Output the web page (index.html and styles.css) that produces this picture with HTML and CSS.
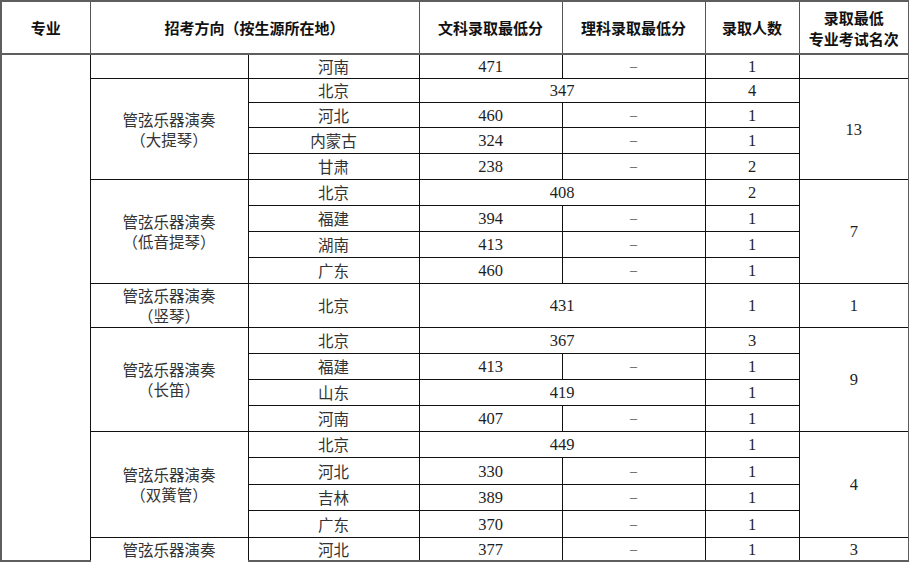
FILE: index.html
```html
<!DOCTYPE html>
<html lang="zh">
<head>
<meta charset="utf-8">
<title>录取情况</title>
<link rel="stylesheet" href="styles.css">
</head>
<body>
<table class="grid">
  <colgroup>
    <col class="c1"><col class="c2"><col class="c3"><col class="c4"><col class="c5"><col class="c6"><col class="c7">
  </colgroup>
  <thead>
    <tr class="hd">
      <th>专业</th>
      <th colspan="2">招考方向（按生源所在地）</th>
      <th>文科录取最低分</th>
      <th>理科录取最低分</th>
      <th>录取人数</th>
      <th>录取最低<br>专业考试名次</th>
    </tr>
  </thead>
  <tbody>
    <tr class="h24">
      <td class="major" rowspan="19"></td>
      <td class="dir"></td>
      <td>河南</td><td class="num">471</td><td class="dash">–</td><td class="num">1</td><td></td>
    </tr>
    <tr class="h24">
      <td class="dir" rowspan="4">管弦乐器演奏<br>（大提琴）</td>
      <td>北京</td><td class="num" colspan="2">347</td><td class="num">4</td><td class="num" rowspan="4">13</td>
    </tr>
    <tr class="h25"><td>河北</td><td class="num">460</td><td class="dash">–</td><td class="num">1</td></tr>
    <tr class="h26"><td>内蒙古</td><td class="num">324</td><td class="dash">–</td><td class="num">1</td></tr>
    <tr class="h26"><td>甘肃</td><td class="num">238</td><td class="dash">–</td><td class="num">2</td></tr>
    <tr class="h26">
      <td class="dir" rowspan="4">管弦乐器演奏<br>（低音提琴）</td>
      <td>北京</td><td class="num" colspan="2">408</td><td class="num">2</td><td class="num" rowspan="4">7</td>
    </tr>
    <tr class="h26"><td>福建</td><td class="num">394</td><td class="dash">–</td><td class="num">1</td></tr>
    <tr class="h26"><td>湖南</td><td class="num">413</td><td class="dash">–</td><td class="num">1</td></tr>
    <tr class="h26"><td>广东</td><td class="num">460</td><td class="dash">–</td><td class="num">1</td></tr>
    <tr class="h44">
      <td class="dir">管弦乐器演奏<br>（竖琴）</td>
      <td>北京</td><td class="num" colspan="2">431</td><td class="num">1</td><td class="num">1</td>
    </tr>
    <tr class="h26">
      <td class="dir" rowspan="4">管弦乐器演奏<br>（长笛）</td>
      <td>北京</td><td class="num" colspan="2">367</td><td class="num">3</td><td class="num" rowspan="4">9</td>
    </tr>
    <tr class="h26"><td>福建</td><td class="num">413</td><td class="dash">–</td><td class="num">1</td></tr>
    <tr class="h26"><td>山东</td><td class="num" colspan="2">419</td><td class="num">1</td></tr>
    <tr class="h26"><td>河南</td><td class="num">407</td><td class="dash">–</td><td class="num">1</td></tr>
    <tr class="h26">
      <td class="dir" rowspan="4">管弦乐器演奏<br>（双簧管）</td>
      <td>北京</td><td class="num" colspan="2">449</td><td class="num">1</td><td class="num" rowspan="4">4</td>
    </tr>
    <tr class="h27"><td>河北</td><td class="num">330</td><td class="dash">–</td><td class="num">1</td></tr>
    <tr class="h26"><td>吉林</td><td class="num">389</td><td class="dash">–</td><td class="num">1</td></tr>
    <tr class="h27"><td>广东</td><td class="num">370</td><td class="dash">–</td><td class="num">1</td></tr>
    <tr class="h24">
      <td class="dir open">管弦乐器演奏</td>
      <td>河北</td><td class="num">377</td><td class="dash">–</td><td class="num">1</td><td class="num">3</td>
    </tr>
  </tbody>
</table>
</body>
</html>
```

FILE: styles.css
```css
html, body {
  margin: 0;
  padding: 0;
  background: #ffffff;
}

.grid {
  border-collapse: collapse;
  table-layout: fixed;
  width: 908px;
  border: 2px solid #5e5e5e;
  font-family: "Noto Sans CJK SC", "Noto Sans", sans-serif;
  color: #333333;
}

.c1 { width: 89px; }
.c2 { width: 158px; }
.c3 { width: 171px; }
.c4 { width: 143px; }
.c5 { width: 143px; }
.c6 { width: 94px; }
.c7 { width: 110px; }

.grid th,
.grid td {
  border: 1px solid #111111;
  padding: 0;
  text-align: center;
  vertical-align: middle;
}

.grid th {
  font-weight: 700;
  font-size: 15px;
  line-height: 21px;
  color: #111111;
  border-color: #555555;
  border-bottom: 2px solid #5e5e5e;
}

.hd { height: 53px; }

.grid td {
  font-size: 15.5px;
  line-height: 20px;
  font-weight: 400;
}

.grid td.major {
  border-left: 2px solid #5e5e5e;
}

.grid td.num {
  font-family: "Liberation Serif", serif;
  font-size: 16.5px;
  color: #1e1e1e;
  padding-top: 2px;
}

.grid td.dash {
  font-family: "Liberation Serif", serif;
  font-size: 14px;
  color: #555555;
  padding-top: 2px;
}

.grid td.open {
  border-bottom: hidden;
}

.h24 { height: 24px; }
.h25 { height: 25px; }
.h26 { height: 26px; }
.h27 { height: 27px; }
.h44 { height: 44px; }
```
